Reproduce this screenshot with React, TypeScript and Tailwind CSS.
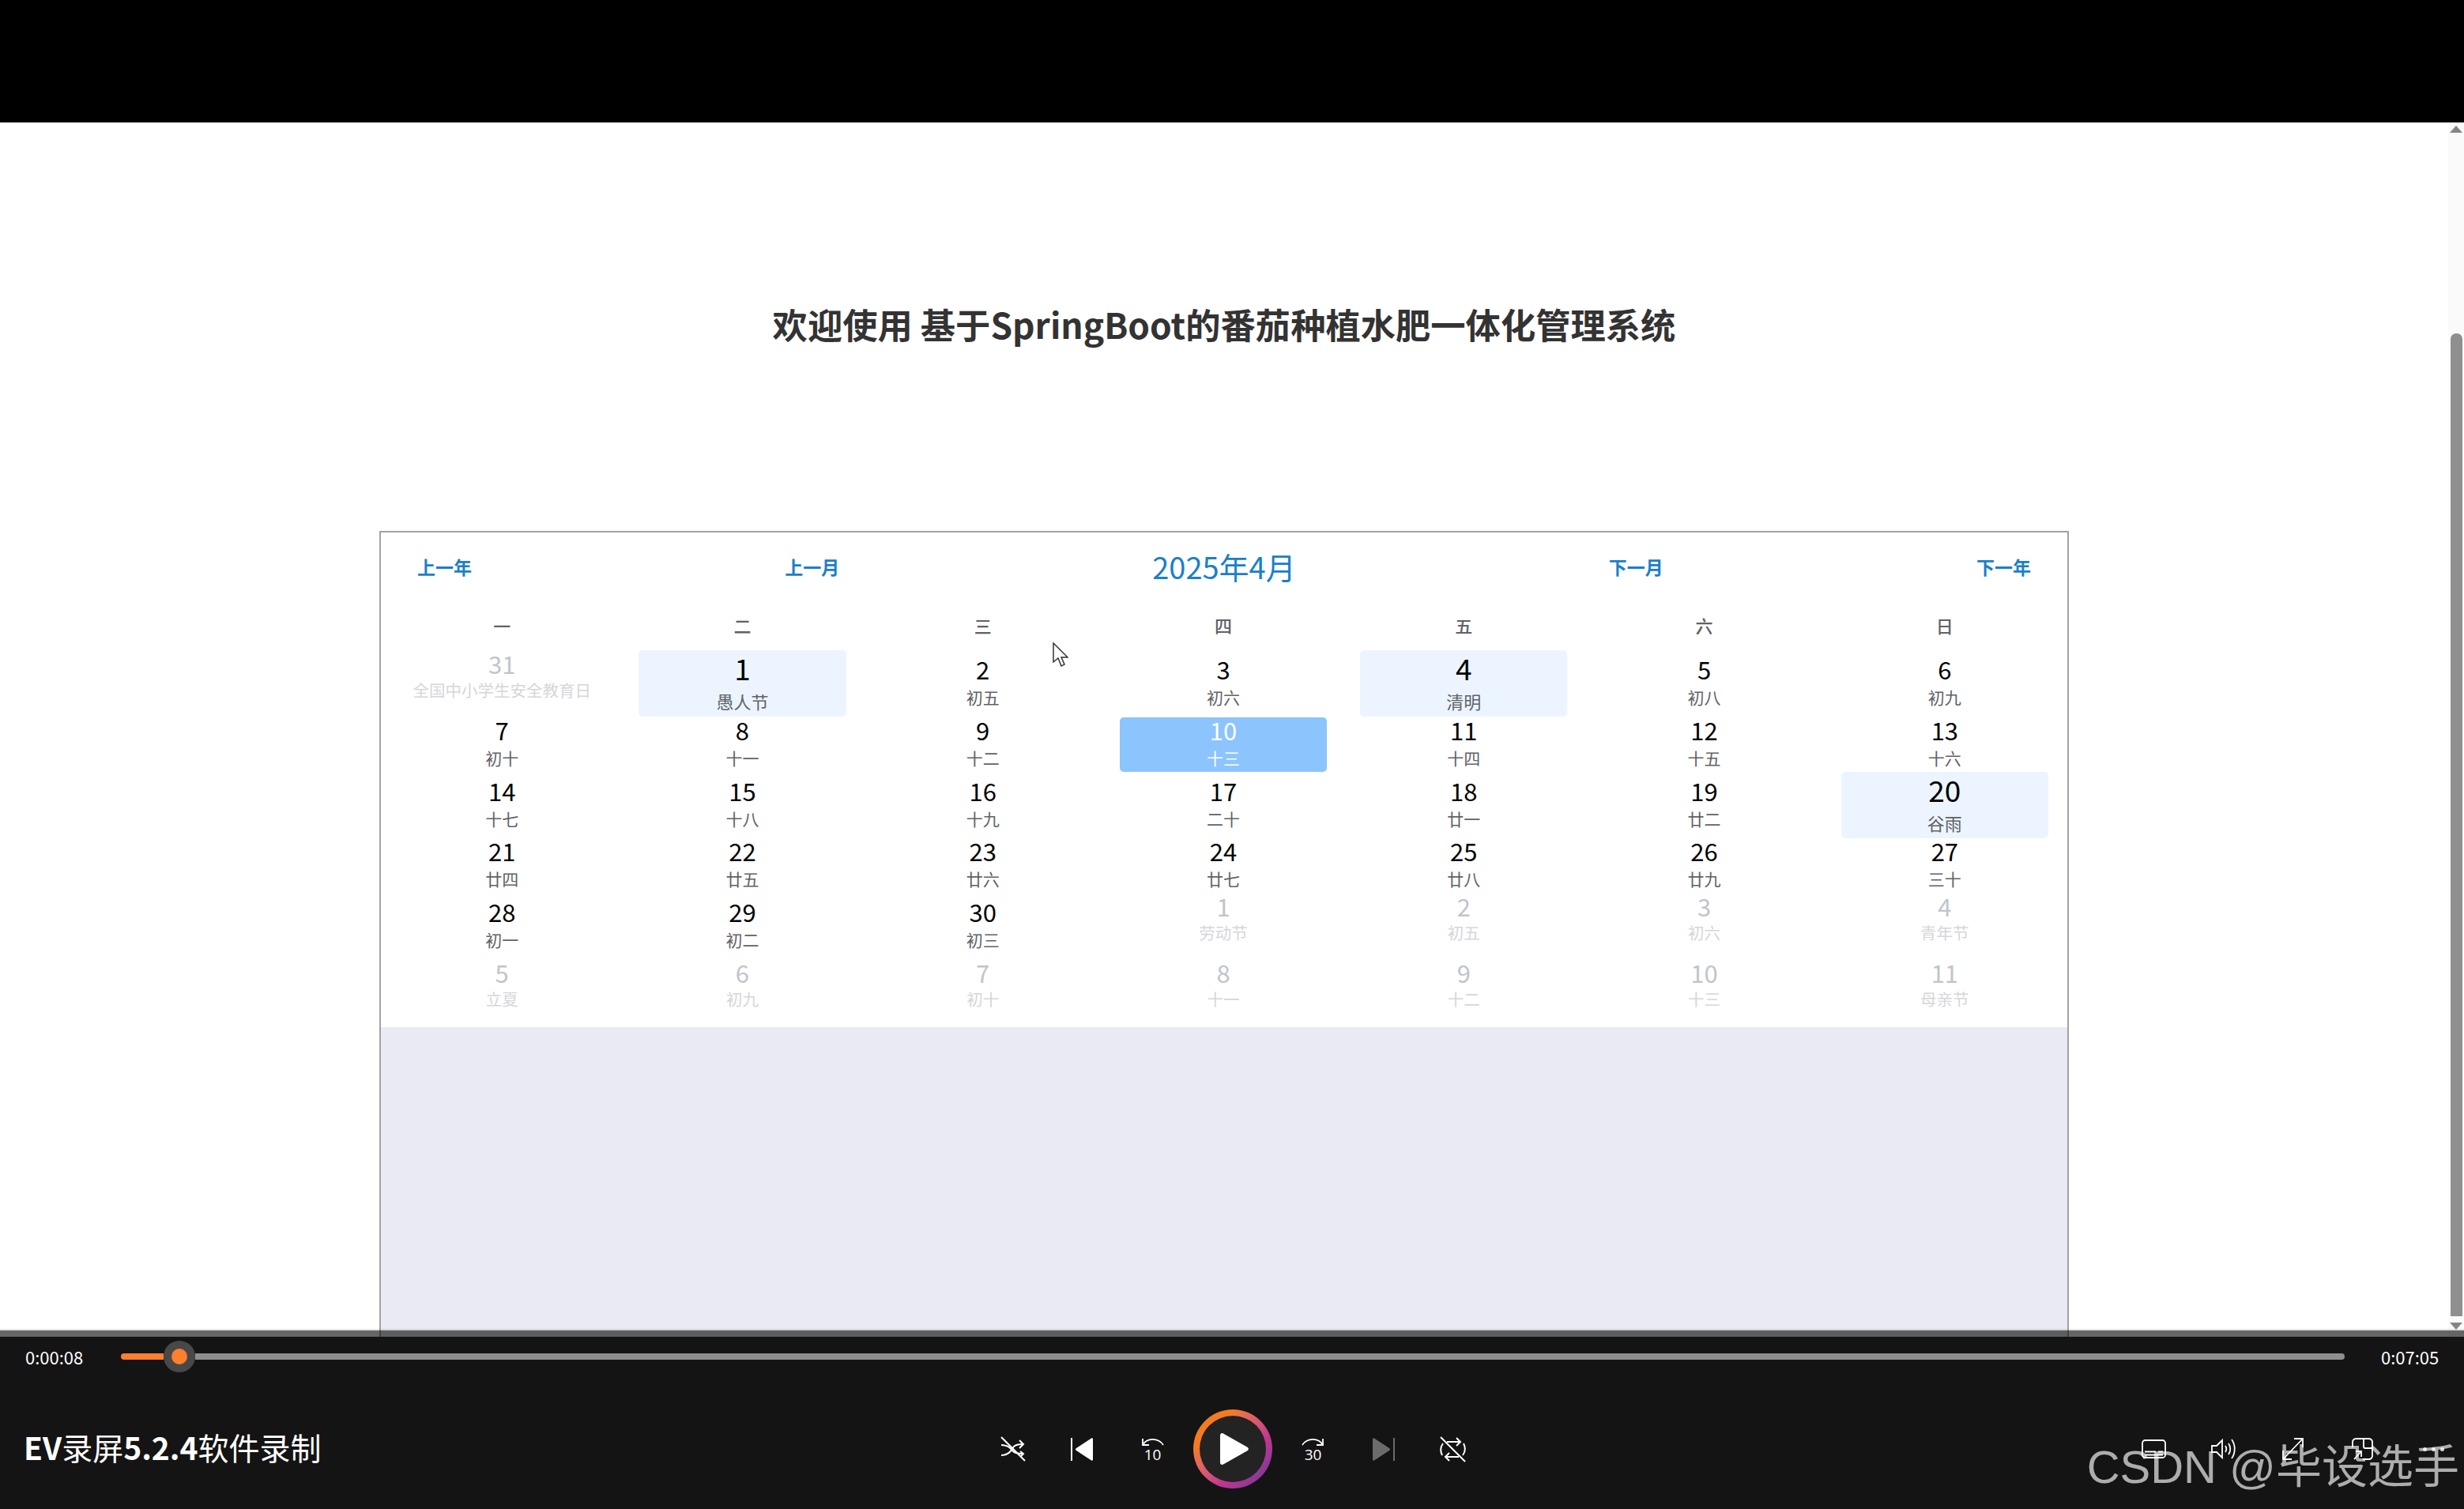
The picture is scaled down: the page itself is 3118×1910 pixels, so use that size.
type Kind = 'other' | 'lift' | 'fest' | 'sel' | 'normal'
type Day = [string, string, Kind?]

const weekdays = ['一', '二', '三', '四', '五', '六', '日']

const days: Day[] = [
  ['31', '全国中小学生安全教育日', 'lift'], ['1', '愚人节', 'fest'], ['2', '初五'], ['3', '初六'], ['4', '清明', 'fest'], ['5', '初八'], ['6', '初九'],
  ['7', '初十'], ['8', '十一'], ['9', '十二'], ['10', '十三', 'sel'], ['11', '十四'], ['12', '十五'], ['13', '十六'],
  ['14', '十七'], ['15', '十八'], ['16', '十九'], ['17', '二十'], ['18', '廿一'], ['19', '廿二'], ['20', '谷雨', 'fest'],
  ['21', '廿四'], ['22', '廿五'], ['23', '廿六'], ['24', '廿七'], ['25', '廿八'], ['26', '廿九'], ['27', '三十'],
  ['28', '初一'], ['29', '初二'], ['30', '初三'], ['1', '劳动节', 'lift'], ['2', '初五', 'lift'], ['3', '初六', 'lift'], ['4', '青年节', 'lift'],
  ['5', '立夏', 'other'], ['6', '初九', 'other'], ['7', '初十', 'other'], ['8', '十一', 'other'], ['9', '十二', 'other'], ['10', '十三', 'other'], ['11', '母亲节', 'other'],
]

function DayCell({ day }: { day: Day }) {
  const [num, sub, kind = 'normal'] = day

  if (kind === 'fest') {
    return (
      <div className="mx-[21px] -mt-2 flex h-[84px] flex-col items-center rounded-[5px] bg-[#ecf5ff] pt-1">
        <span className="text-[37px] leading-[36px] text-black">{num}</span>
        <span className="text-[22px] leading-[48px] text-[#606266]">{sub}</span>
      </div>
    )
  }
  if (kind === 'sel') {
    return (
      <div className="mx-[21px] flex h-[69px] flex-col items-center rounded-[5px] bg-[#8cc4fd]">
        <span className="text-[31px] leading-[32px] text-white">{num}</span>
        <span className="text-[21px] leading-[38px] text-white">{sub}</span>
      </div>
    )
  }
  if (kind === 'other' || kind === 'lift') {
    return (
      <div className={`flex flex-col items-center ${kind === 'lift' ? '-mt-[7px]' : ''}`}>
        <span className="text-[31px] leading-[32px] text-[#c0c4cc]">{num}</span>
        <span className="whitespace-nowrap text-[20.5px] leading-[34px] text-[#d4d6da]">{sub}</span>
      </div>
    )
  }
  return (
    <div className="flex flex-col items-center">
      <span className="text-[31px] leading-[32px] text-black">{num}</span>
      <span className="text-[21px] leading-[38px] text-[#606266]">{sub}</span>
    </div>
  )
}

function Calendar() {
  return (
    <div className="flex w-[2138px] flex-1 flex-col border-x-2 border-t-2 border-[#a3a3a3] bg-[#e9eaf3]">
      <div className="bg-white pb-[8px]">
        <div className="flex h-[86px] items-center justify-between pl-[46px] pr-[46px] text-[#1b7fc9]">
          <span className="text-[23px] font-semibold">上一年</span>
          <span className="text-[23px] font-semibold">上一月</span>
          <span className="text-[38px] leading-none">2025年4月</span>
          <span className="text-[23px] font-semibold">下一月</span>
          <span className="text-[23px] font-semibold">下一年</span>
        </div>
        <div className="grid h-[62px] grid-cols-7 items-center pl-[1px] pr-[3px] text-center text-[22px] font-medium text-[#606266]">
          {weekdays.map((w) => (
            <span key={w}>{w}</span>
          ))}
        </div>
        <div className="grid auto-rows-[76.8px] grid-cols-7 pl-[1px] pr-[3px] pt-[9px]">
          {days.map((d, i) => (
            <DayCell key={i} day={d} />
          ))}
        </div>
      </div>
    </div>
  )
}

function Scrollbar() {
  return (
    <div className="flex w-[20px] flex-col items-end bg-[#fafafa] pr-[2px] pt-[4px]">
      <svg viewBox="0 0 16 9" className="h-[9px] w-[16px] fill-[#858585]"><path d="M8 0 16 9H0Z" /></svg>
      <div className="mt-[254px] w-[15px] flex-1 rounded-t-[7px] bg-[#8f8f8f]" />
      <svg viewBox="0 0 16 9" className="mb-[9px] mt-[8px] h-[9px] w-[16px] fill-[#858585]"><path d="M0 0H16L8 9Z" /></svg>
    </div>
  )
}

function PlayControls() {
  return (
    <div className="flex items-center">
      {/* shuffle off */}
      <svg viewBox="0 0 32 32" className="h-[32px] w-[32px]" fill="none" stroke="white" strokeWidth="2">
        <path d="M1 1 31 31" />
        <path d="M1 11c8 0 11 3 15 8 2 2 6 3 12 3" />
        <path d="M1 24c8 0 12-4 15-10 2-3 6-4 12-4" />
        <path d="M24 5l5 5-5 5M25 19l4 3-3 3" />
      </svg>
      {/* previous */}
      <svg viewBox="0 0 29 29" className="ml-[57px] h-[29px] w-[29px]" fill="white">
        <rect x="0" y="0" width="2" height="29" />
        <path d="M28 1.500v26c0 1-1 1.500-2 1L7 16c-1.500-1-1.500-2 0-3L26 .5c1-.5 2 0 2 1Z" />
      </svg>
      {/* back 10 */}
      <svg viewBox="0 0 29 30" className="ml-[60px] h-[30px] w-[29px] overflow-visible" fill="none" stroke="white" strokeWidth="1.800">
        <path d="M2 2v8h8" />
        <path d="M2 10C7 .5 22 .5 28 10" />
        <text x="14.500" y="29" textAnchor="middle" fontSize="19" fill="white" stroke="none" fontFamily="'Open Sans', sans-serif">10</text>
      </svg>
      {/* play */}
      <div className="ml-[37px] flex h-[100px] w-[100px] items-center justify-center rounded-full bg-linear-to-br from-[#f47b20] from-25% via-[#c2358f] via-65% to-[#5f3199] p-[8px]">
        <div className="flex h-full w-full items-center justify-center rounded-full bg-[#232323] pl-[3px]">
          <svg viewBox="0 0 36 40" className="h-[40px] w-[36px]" fill="white">
            <path d="M0 3C0 .5 2-.5 4 .5l30 17c2.500 1.500 2.500 3.500 0 5l-30 17c-2 1-4 0-4-2.500Z" />
          </svg>
        </div>
      </div>
      {/* forward 30 */}
      <svg viewBox="0 0 29 30" className="ml-[37px] h-[30px] w-[29px] overflow-visible" fill="none" stroke="white" strokeWidth="1.800">
        <path d="M27 2v8h-8" />
        <path d="M27 10C22 .5 7 .5 1 10" />
        <text x="14.500" y="29" textAnchor="middle" fontSize="19" fill="white" stroke="none" fontFamily="'Open Sans', sans-serif">30</text>
      </svg>
      {/* next, disabled */}
      <svg viewBox="0 0 29 29" className="ml-[60px] h-[29px] w-[29px]" fill="#6b6b6b">
        <rect x="27" y="0" width="2" height="29" />
        <path d="M1 1.500v26c0 1 1 1.500 2 1L22 16c1.500-1 1.500-2 0-3L3 .5c-1-.5-2 0-2 1Z" />
      </svg>
      {/* repeat off */}
      <svg viewBox="0 0 33 33" className="ml-[57px] h-[33px] w-[33px]" fill="none" stroke="white" strokeWidth="2">
        <path d="M1 1 32 32" />
        <path d="M9 7H26M21 2l5 5-5 5" />
        <path d="M24 26H7M12 21l-5 5 5 5" />
        <path d="M3 24C.5 19 1 13 4 9M30 9c2.500 5 2 11-1 15" />
      </svg>
    </div>
  )
}

function RightControls() {
  return (
    <div className="ml-[855px] flex items-center">
      <svg viewBox="0 0 31 24" className="h-[24px] w-[31px]" fill="none" stroke="white" strokeWidth="1.800">
        <rect x="1" y="1" width="29" height="22" rx="3.500" />
        <path d="M4 15.500h14M21 15.500h6M4 19.500h23" />
      </svg>
      <svg viewBox="0 0 31 28" className="ml-[57px] h-[28px] w-[31px]" fill="none" stroke="white" strokeWidth="1.800">
        <path d="M1 10v8h6l7 7V3L7 10Z" />
        <path d="M18 10c2 3 2 5 0 8M22 7c3 4 3 10 0 14M26 2c5 7 5 17 0 24" />
      </svg>
      <svg viewBox="0 0 27 28" className="ml-[59px] h-[28px] w-[27px]" fill="none" stroke="white" strokeWidth="1.800">
        <path d="M15 1h11v11M26 1 1 27M1 16v11h11" />
      </svg>
      <svg viewBox="0 0 27 28" className="ml-[61px] h-[28px] w-[27px]" fill="none" stroke="white" strokeWidth="1.800">
        <path d="M1 12V5c0-2 2-4 4-4h17c2 0 4 2 4 4v18c0 2-2 4-4 4h-8" />
        <path d="M15 1v10c0 1 1 2 2 2h9" />
        <path d="M3 27 11 18M5 17h7v7" />
      </svg>
      <div className="ml-[63px] flex gap-[6px] opacity-80">
        <span className="h-[5px] w-[5px] rounded-full bg-white" />
        <span className="h-[5px] w-[5px] rounded-full bg-white" />
        <span className="h-[5px] w-[5px] rounded-full bg-white" />
      </div>
    </div>
  )
}

function Player() {
  return (
    <div className="relative h-[218px] bg-[#141414] text-white">
      {/* translucent edge of the player over the page */}
      <div className="absolute inset-x-0 -top-[10px] h-[2px] bg-black/10" />
      <div className="absolute inset-x-0 -top-[8px] h-[8px] bg-black/60" />

      <div className="flex h-[50px] items-center">
        <span className="w-[153px] pl-[32px] text-[22px] leading-none">0:00:08</span>
        <div className="h-[8px] w-[54px] rounded-l-full bg-[#fe7f2d]" />
        <div className="flex h-[40px] w-[40px] items-center justify-center rounded-full bg-[#484848]">
          <div className="h-[20px] w-[20px] rounded-full bg-[#fe7f2d]" />
        </div>
        <div className="h-[8px] w-[2720px] rounded-r-full bg-[#8e8e8e]" />
        <span className="ml-[46px] text-[22px] leading-none">0:07:05</span>
      </div>

      <div className="mt-[42px] flex h-[100px] items-center">
        <div className="w-[1266px] whitespace-nowrap pb-[6px] pl-[30px] text-[39px] leading-none">
          <span className="font-semibold">EV</span>录屏<span className="font-semibold">5.2.4</span>软件录制
        </div>
        <PlayControls />
        <RightControls />
      </div>

      <div className="absolute bottom-[20px] right-[6px] whitespace-nowrap font-['Liberation_Sans','Noto_Sans_CJK_SC',sans-serif] text-[58px] leading-[66px] text-white/65">
        CSDN @毕设选手
      </div>
    </div>
  )
}

export default function App() {
  return (
    <div className="flex h-[1910px] w-[3118px] flex-col overflow-hidden bg-white font-['Noto_Sans_CJK_SC','Noto_Sans',sans-serif]">
      <div className="h-[155px] bg-black" />
      <div className="relative flex min-h-0 flex-1">
        <main className="flex min-w-0 flex-1 flex-col items-center">
          <h1 className="mt-[225px] text-[44.3px] font-bold leading-[60px] text-[#333]">
            欢迎使用 基于SpringBoot的番茄种植水肥一体化管理系统
          </h1>
          <div className="mt-[232px] flex min-h-0 flex-1">
            <Calendar />
          </div>
        </main>
        <Scrollbar />
        {/* mouse pointer from the recording */}
        <svg viewBox="0 0 20 32" className="absolute left-[1332px] top-[658px] h-[32px] w-[20px]" fill="white" stroke="#333" strokeWidth="1.500">
          <path d="M1 1v24l6-5 4 10 4-2-4-9h8Z" />
        </svg>
      </div>
      <Player />
    </div>
  )
}
